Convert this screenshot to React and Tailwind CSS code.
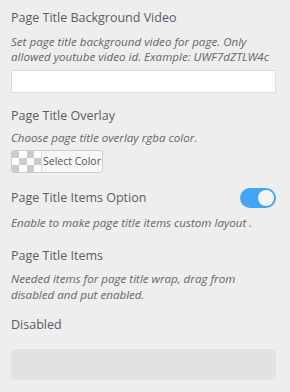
export default function App() {
  return (
    <div className="w-[290px] h-[392px] bg-[#eeeeee] pl-[11px] pr-[14px] pt-[9px] font-['Open_Sans',sans-serif] text-[#555d66]">
      <div className="text-[12.5px] leading-[18px] font-medium">Page Title Background Video</div>
      <div className="mt-[7px] text-[11.6px] leading-[15px] italic text-[#666]">
        Set page title background video for page. Only allowed youtube video id. Example: UWF7dZTLW4c
      </div>
      <div className="mt-[6px] h-[23px] bg-white border border-[#dddddd]"></div>

      <div className="mt-[14px] text-[12.5px] leading-[18px] font-medium">Page Title Overlay</div>
      <div className="mt-[5px] text-[11.6px] leading-[15px] italic text-[#666]">Choose page title overlay rgba color.</div>
      <div className="mt-[5px] flex">
        <div className="flex h-[23px] w-[92px] border border-[#ccc] rounded-[3px] overflow-hidden bg-[#f7f7f7]">
          <div className="grid grid-cols-4 grid-rows-3 w-[29px] h-full shrink-0">
            {[0,1,2,3,4,5,6,7,8,9,10,11].map((i) => {
              const r = Math.floor(i / 4), c = i % 4;
              const dark = (r + c) % 2 === 0;
              return <div key={i} className={dark ? 'bg-[#cccccc]' : 'bg-white'} />;
            })}
          </div>
          <div className="flex-1 flex items-center justify-center whitespace-nowrap text-[10.5px] text-[#555] border-l border-[#ddd]">Select Color</div>
        </div>
      </div>

      <div className="mt-[15px] flex items-center justify-between">
        <div className="text-[12.5px] leading-[18px] font-medium">Page Title Items Option</div>
        <div className="w-[36px] h-[20px] rounded-full bg-[#42a5f5] flex items-center justify-end pr-[2px]">
          <div className="w-[16px] h-[16px] rounded-full bg-[#f5f5f5]"></div>
        </div>
      </div>
      <div className="mt-[7px] text-[11.6px] leading-[15px] italic text-[#666]">Enable to make page title items custom layout .</div>

      <div className="mt-[17px] text-[12.5px] leading-[18px] font-medium">Page Title Items</div>
      <div className="mt-[6px] text-[11.6px] leading-[16px] italic text-[#666]">
        Needed items for page title wrap, drag from disabled and put enabled.
      </div>

      <div className="mt-[13px] text-[12.5px] leading-[18px] font-medium">Disabled</div>
      <div className="mt-[15px] h-[31px] rounded-[5px] bg-[#e2e2e2]"></div>
    </div>
  );
}
